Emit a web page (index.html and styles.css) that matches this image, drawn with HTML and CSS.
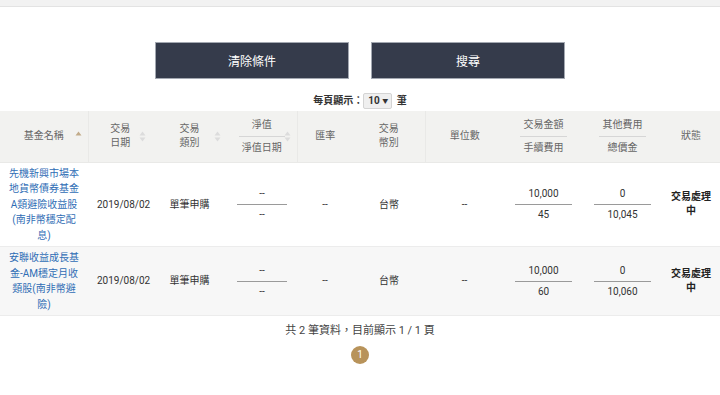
FILE: index.html
```html
<!DOCTYPE html>
<html lang="zh-Hant">
<head>
<meta charset="utf-8">
<title>交易查詢</title>
<link rel="stylesheet" href="styles.css">
</head>
<body>
<div class="topbar"></div>
<div class="actions">
  <button class="btn">清除條件</button>
  <button class="btn">搜尋</button>
</div>
<div class="perpage">每頁顯示：<span class="select">10 <span class="caret">▼</span></span> 筆</div>
<table class="grid">
  <colgroup>
    <col class="w88"><col class="w64"><col class="w75"><col class="w70"><col class="w56">
    <col class="w72"><col class="w79"><col class="w79"><col class="w79"><col class="w58">
  </colgroup>
  <thead>
    <tr>
      <th class="sortable sep">基金名稱<svg class="sort" viewBox="0 0 7 11" width="7" height="11"><path d="M0.5 4.5 L3.5 0.5 L6.5 4.5 Z" fill="#c2ab8a"/></svg></th>
      <th class="sortable">交易<br>日期<svg class="sort" viewBox="0 0 7 11" width="7" height="11"><path d="M0.5 4.5 L3.5 0.5 L6.5 4.5 Z" fill="#dcdcdc"/><path d="M0.5 6.5 L3.5 10.5 L6.5 6.5 Z" fill="#dcdcdc"/></svg></th>
      <th class="sortable">交易<br>類別<svg class="sort" viewBox="0 0 7 11" width="7" height="11"><path d="M0.5 4.5 L3.5 0.5 L6.5 4.5 Z" fill="#dcdcdc"/><path d="M0.5 6.5 L3.5 10.5 L6.5 6.5 Z" fill="#dcdcdc"/></svg></th>
      <th class="sortable sep"><div class="hsplit"><div class="htop">淨值</div><div class="hbot">淨值日期</div></div><svg class="sort" viewBox="0 0 7 11" width="7" height="11"><path d="M0.5 4.5 L3.5 0.5 L6.5 4.5 Z" fill="#dcdcdc"/><path d="M0.5 6.5 L3.5 10.5 L6.5 6.5 Z" fill="#dcdcdc"/></svg></th>
      <th>匯率</th>
      <th class="sep">交易<br>幣別</th>
      <th>單位數</th>
      <th><div class="hsplit"><div class="htop">交易金額</div><div class="hbot">手續費用</div></div></th>
      <th><div class="hsplit"><div class="htop">其他費用</div><div class="hbot">總價金</div></div></th>
      <th>狀態</th>
    </tr>
  </thead>
  <tbody>
    <tr>
      <td class="fund"><a href="#">先機新興市場本地貨幣債券基金A類避險收益股(南非幣穩定配息)</a></td>
      <td>2019/08/02</td>
      <td>單筆申購</td>
      <td><div class="split s50"><div class="top">--</div><div class="bot">--</div></div></td>
      <td>--</td>
      <td>台幣</td>
      <td>--</td>
      <td><div class="split"><div class="top">10,000</div><div class="bot">45</div></div></td>
      <td><div class="split"><div class="top">0</div><div class="bot">10,045</div></div></td>
      <td class="status">交易處理中</td>
    </tr>
    <tr class="alt">
      <td class="fund"><a href="#">安聯收益成長基金-AM穩定月收類股(南非幣避險)</a></td>
      <td>2019/08/02</td>
      <td>單筆申購</td>
      <td><div class="split s50"><div class="top">--</div><div class="bot">--</div></div></td>
      <td>--</td>
      <td>台幣</td>
      <td>--</td>
      <td><div class="split"><div class="top">10,000</div><div class="bot">60</div></div></td>
      <td><div class="split"><div class="top">0</div><div class="bot">10,060</div></div></td>
      <td class="status">交易處理中</td>
    </tr>
  </tbody>
</table>
<div class="summary">共 2 筆資料，目前顯示 1 / 1 頁</div>
<div class="pager"><span class="page">1</span></div>
</body>
</html>
```

FILE: styles.css
```css
* { box-sizing: border-box; }
body {
  margin: 0;
  font-family: Roboto, "Noto Sans CJK TC", sans-serif;
  color: #333;
  background: #fff;
}
.topbar {
  height: 7px;
  background: #f2f2f2;
  border-bottom: 1px solid #e3e3e3;
}
.actions {
  display: flex;
  justify-content: center;
  gap: 22px;
  margin-top: 35px;
}
.btn {
  width: 194px;
  height: 37px;
  padding: 0;
  background: #353b4b;
  border: 1px solid #a3a8b1;
  color: #fff;
  font: 12px "Noto Sans CJK TC", sans-serif;
}
.perpage {
  margin-top: 12px;
  height: 20px;
  line-height: 20px;
  text-align: center;
  font-size: 10px;
  font-weight: bold;
  color: #333;
}
.select {
  display: inline-block;
  height: 16px;
  line-height: 14px;
  padding: 0 3px 0 4px;
  margin: 0 2px 0 0;
  background: #efefef;
  border: 1px solid #d4d4d4;
  border-radius: 2px;
  vertical-align: middle;
  font-weight: bold;
}
.caret { font-size: 6px; vertical-align: 1px; }
.grid {
  width: 720px;
  border-collapse: collapse;
  table-layout: fixed;
}
.w88 { width: 88px; } .w64 { width: 64px; } .w75 { width: 75px; }
.w70 { width: 70px; } .w56 { width: 56px; } .w72 { width: 72px; }
.w79 { width: 79px; } .w58 { width: 58px; }
.grid th {
  position: relative;
  height: 51px;
  padding: 0 16px;
  background: #f2f2f0;
  color: #666;
  font-size: 10px;
  font-weight: normal;
  line-height: 14px;
  text-align: center;
  vertical-align: middle;
  border-bottom: 1px solid #e9e9e7;
}
.grid th.sep { border-right: 1px solid #e9e9e7; }
.grid th.sortable { padding: 0 12px; }
.sort {
  position: absolute;
  right: 6px;
  top: 20px;
}
.hsplit .htop { padding-bottom: 4px; border-bottom: 1px solid #d6d6d6; }
.hsplit .hbot { padding-top: 4px; }
.grid td {
  padding: 3px 9px;
  font-size: 10px;
  line-height: 15.5px;
  text-align: center;
  vertical-align: middle;
  border-bottom: 1px solid #ececec;
  color: #333;
}
.grid tr.alt td { background: #f7f7f7; }
.grid td.fund a { color: #2f6db5; text-decoration: none; }
.grid td.status {
  padding: 3px 8px;
  font-weight: bold;
  line-height: 14px;
  color: #222;
}
.split { margin: 0 2px; }
.split.s50 { margin: 0 1px; }
.split .top { line-height: 16px; padding-bottom: 2px; border-bottom: 1px solid #9a9a9a; }
.split .bot { line-height: 16px; padding-top: 2px; }
.summary {
  margin-top: 7px;
  text-align: center;
  font-size: 11px;
  line-height: 16px;
  color: #444;
}
.pager {
  display: flex;
  justify-content: center;
  margin-top: 7px;
}
.page {
  width: 18px;
  height: 18px;
  border-radius: 50%;
  background: #b8935a;
  color: #fff;
  font-size: 10px;
  line-height: 18px;
  text-align: center;
}
```
